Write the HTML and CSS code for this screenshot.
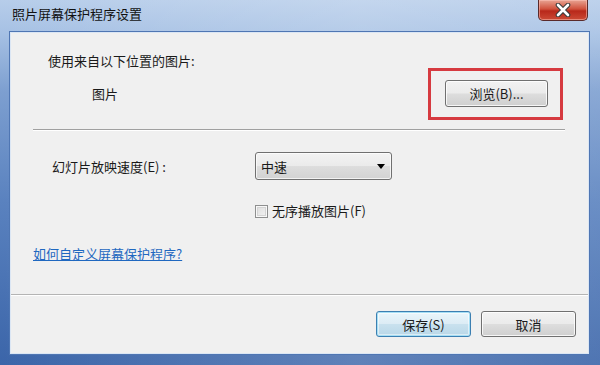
FILE: index.html
```html
<!DOCTYPE html>
<html lang="zh-CN">
<head>
<meta charset="utf-8">
<title>照片屏幕保护程序设置</title>
<link rel="stylesheet" href="styles.css">
</head>
<body>
<div class="window">
  <div class="titlebar">
    <span class="title">照片屏幕保护程序设置</span>
    <div class="close" aria-label="关闭">
      <svg width="20" height="14" viewBox="0 0 20 14">
        <path d="M5 2 L15 12 M15 2 L5 12" stroke="#3b3b3b" stroke-width="4.6" stroke-linecap="round"/>
        <path d="M5 2 L15 12 M15 2 L5 12" stroke="#ffffff" stroke-width="2.6" stroke-linecap="round"/>
      </svg>
    </div>
  </div>
  <div class="client">
    <div class="source">
      <div class="source-label">使用来自以下位置的图片:</div>
      <div class="source-row">
        <span class="source-value">图片</span>
        <div class="highlight">
          <button class="btn browse">浏览(B)...</button>
        </div>
      </div>
    </div>
    <div class="sep"></div>
    <div class="speed-row">
      <span class="speed-label">幻灯片放映速度(E) :</span>
      <div class="select">
        <span>中速</span>
        <svg class="arrow" width="8" height="5" viewBox="0 0 8 5"><path d="M0 0 H8 L4 5 Z" fill="#000"/></svg>
      </div>
    </div>
    <div class="shuffle-row">
      <span class="checkbox"></span>
      <span class="shuffle-label">无序播放图片(F)</span>
    </div>
    <div class="link-row"><a class="link" href="#">如何自定义屏幕保护程序?</a></div>
    <div class="footer">
      <button class="btn default">保存(S)</button>
      <button class="btn">取消</button>
    </div>
  </div>
</div>
</body>
</html>
```

FILE: styles.css
```css
* { box-sizing: border-box; }
html, body { margin: 0; padding: 0; }
body {
  width: 600px;
  height: 365px;
  overflow: hidden;
  font-family: "Noto Sans CJK SC", "Noto Sans", sans-serif;
  font-size: 13px;
  color: #1a1a1a;
  background: #3a64a8;
}
.window {
  width: 600px;
  height: 365px;
  display: flex;
  flex-direction: column;
  padding: 0 12px 12px 11px;
  background:
    linear-gradient(90deg, rgba(255,255,255,0.0) 0%, rgba(255,255,255,0.18) 60%, rgba(255,255,255,0.1) 100%),
    linear-gradient(180deg, #b7cdea 0%, #a6c1e4 9%, #7d9fd0 25%, #5a82bf 55%, #3b65a9 100%);
}
.titlebar {
  height: 33px;
  flex: none;
  display: flex;
  justify-content: space-between;
  align-items: flex-start;
}
.title {
  margin-top: 5px;
  padding-left: 1px;
  line-height: 18px;
  font-size: 13px;
  color: #111;
}
.close {
  width: 50px;
  height: 21px;
  display: flex;
  align-items: center;
  justify-content: center;
  border: 1px solid #5a2a2a;
  border-top: none;
  border-radius: 0 0 5px 5px;
  background: linear-gradient(180deg, #e8a493 0%, #d0513c 45%, #b8281a 55%, #cc4a35 100%);
  box-shadow: inset 0 0 0 1px rgba(255,200,190,0.5);
}
.client {
  flex: 1;
  display: flex;
  flex-direction: column;
  background: #f0f0f0;
  box-shadow: 0 0 0 1px #dbe6f4, 0 0 0 2px #4f76b3;
}
.source {
  padding: 20px 25px 0 37px;
}
.source-label {
  line-height: 15px;
}
.source-row {
  display: flex;
  align-items: center;
  justify-content: space-between;
  padding-left: 44px;
}
.source-value { line-height: 16px; }
.highlight {
  width: 135px;
  height: 52px;
  border: 3px solid #d63a40;
  padding: 9px 12px 10px 14px;
}
.btn {
  font-family: "Noto Sans CJK SC", "Noto Sans", sans-serif;
  font-size: 13px;
  color: #1a1a1a;
  width: 95px;
  height: 26px;
  padding: 0;
  border: 1px solid #707070;
  border-radius: 3px;
  background: linear-gradient(180deg, #f2f2f2 0%, #ebebeb 48%, #dddddd 52%, #cfcfcf 100%);
  box-shadow: inset 0 0 0 1px rgba(255,255,255,0.8);
}
.browse {
  width: 103px;
  height: 27px;
}
.btn.default {
  border-color: #3c7fb1;
  box-shadow: inset 0 0 0 1px #a6dff5, inset 0 0 0 2px rgba(255,255,255,0.5);
  background: linear-gradient(180deg, #eaf6fb 0%, #dcecf5 48%, #c8e1ee 52%, #b9d7e8 100%);
}
.sep {
  margin: 9px 23px 0 22px;
  border-top: 1px solid #a0a0a0;
  border-bottom: 1px solid #ffffff;
}
.speed-row {
  margin-top: 21px;
  display: grid;
  grid-template-columns: 203px 137px;
  align-items: center;
  padding-left: 41px;
}
.select {
  height: 28px;
  display: flex;
  align-items: center;
  justify-content: space-between;
  padding: 0 6px 0 5px;
  border: 1px solid #707070;
  border-radius: 3px;
  background: linear-gradient(180deg, #f3f3f3 0%, #ebebeb 48%, #dddddd 52%, #d2d2d2 100%);
  box-shadow: inset 0 0 0 1px rgba(255,255,255,0.7);
}
.shuffle-row {
  margin-top: 23px;
  height: 16px;
  display: flex;
  align-items: center;
  gap: 4px;
  padding-left: 244px;
}
.checkbox {
  width: 13px;
  height: 13px;
  border: 1px solid #8e8f8f;
  background: linear-gradient(135deg, #dcdcdc 0%, #f4f4f4 100%);
  box-shadow: inset 0 0 0 1px #f8f8f8, inset 0 0 0 2px #d4d4d4;
}
.shuffle-label { line-height: 16px; }
.link-row {
  margin-top: 27px;
  padding-left: 22px;
  line-height: 16px;
}
.link {
  color: #1f68c0;
  text-decoration: underline;
}
.footer {
  margin-top: auto;
  display: flex;
  justify-content: flex-end;
  gap: 10px;
  padding: 16px 12px 16px;
  border-top: 1px solid #b4b4b4;
  box-shadow: inset 0 1px 0 #ffffff;
}
```
